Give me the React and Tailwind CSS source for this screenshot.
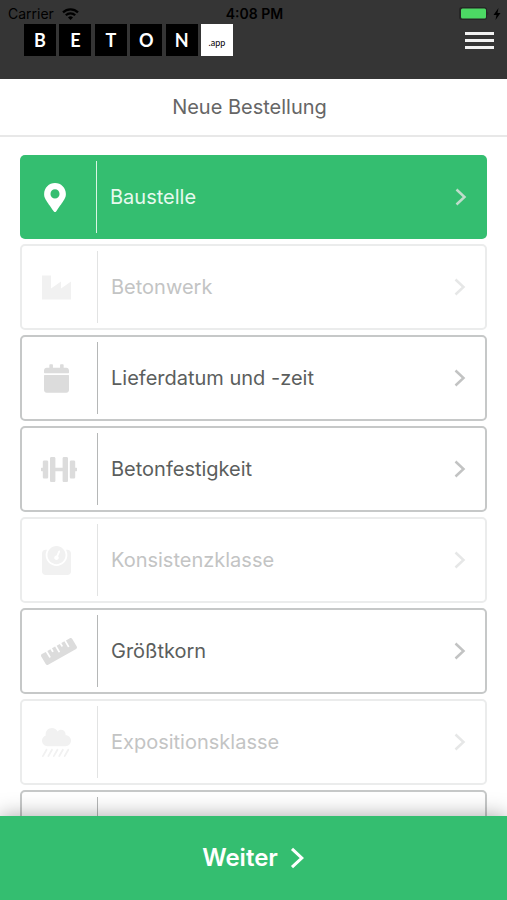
import React from "react";
import {
  FaCalendar,
  FaCloudShowersHeavy,
  FaDumbbell,
  FaMapMarkerAlt,
  FaRuler,
  FaTint,
  FaWeight,
} from "react-icons/fa";

function FactoryIcon({ className }) {
  return (
    <svg viewBox="0 0 29 29" fill="currentColor" className={className}>
      <path d="M0 2.5h9v13l10-7v7l10-7v18H0z" />
    </svg>
  );
}

function Chevron({ className }) {
  return (
    <svg
      viewBox="0 0 12 18"
      fill="none"
      stroke="currentColor"
      strokeWidth="2.5"
      className={className}
    >
      <path d="M1.5 1.5L9.5 9l-8 7.5" />
    </svg>
  );
}

const steps = [
  { label: "Baustelle", Icon: FaMapMarkerAlt, size: "w-[22px]", state: "active" },
  { label: "Betonwerk", Icon: FactoryIcon, size: "w-[29px]", state: "disabled" },
  { label: "Lieferdatum und -zeit", Icon: FaCalendar, size: "w-[25px]", state: "open" },
  { label: "Betonfestigkeit", Icon: FaDumbbell, size: "w-[36px]", state: "open" },
  { label: "Konsistenzklasse", Icon: FaWeight, size: "w-[29px]", state: "disabled" },
  { label: "Größtkorn", Icon: FaRuler, size: "w-[36px]", state: "open" },
  { label: "Expositionsklasse", Icon: FaCloudShowersHeavy, size: "w-[29px]", state: "disabled" },
  { label: "", name: "Weitere Angaben", Icon: FaTint, size: "w-[22px]", state: "open" },
];

const styles = {
  active: {
    row: "h-[84px] px-5 border-0 bg-[#34be70]",
    icon: "text-white",
    line: "bg-[#d9f5e4]",
    text: "text-[#e6f9ee]",
    arrow: "text-[#bfdccb]",
  },
  open: {
    row: "h-[86px] px-[19px] border-2 border-[#c6c8c8] bg-white",
    icon: "text-[#dcdcdc]",
    line: "bg-[#b5b7b7]",
    text: "text-[#5b5e5d]",
    arrow: "text-[#c2c3c3]",
  },
  disabled: {
    row: "h-[86px] px-[19px] border-2 border-[#ebecec] bg-white",
    icon: "text-[#f1f1f1]",
    line: "bg-[#e2e3e3]",
    text: "text-[#c3c4c4]",
    arrow: "text-[#e6e7e7]",
  },
};

function StepRow({ step }) {
  const { label, name, Icon, size, state } = step;
  const s = styles[state];
  return (
    <button
      type="button"
      disabled={state === "disabled"}
      aria-label={name}
      className={`flex w-full shrink-0 items-center rounded-[5px] text-left ${s.row}`}
    >
      <span className="block w-[30px] shrink-0">
        <Icon className={`mx-auto h-[29px] ${size} ${s.icon}`} />
      </span>
      <span className={`ml-[26px] h-[72px] w-px shrink-0 ${s.line}`} />
      <span className={`ml-[13px] flex-1 text-xl ${s.text}`}>{label}</span>
      <Chevron className={`h-[18px] w-3 shrink-0 ${s.arrow}`} />
    </button>
  );
}

function StatusBar() {
  return (
    <div className="grid h-6 grid-cols-3 items-center pt-1 pr-1.5 pl-2 text-sm leading-5 text-black">
      <div className="flex items-center gap-2">
        <span>Carrier</span>
        <svg viewBox="0 0 17 12" fill="none" stroke="currentColor" strokeWidth="2.2" className="h-3 w-[17px]">
          <path d="M1 4.4a10.6 10.6 0 0 1 15 0M3.800 7.300a6.600 6.600 0 0 1 9.400 0" />
          <path d="M8.5 12L6 9.400a3.600 3.600 0 0 1 5 0z" fill="currentColor" stroke="none" />
        </svg>
      </div>
      <span className="text-center font-semibold">4:08 PM</span>
      <div className="flex items-center justify-end gap-1">
        <svg viewBox="0 0 30 14" className="h-3.5 w-[30px]">
          <rect x="0" y="0" width="28" height="13" rx="3" fill="#262626" />
          <rect x="2" y="1.5" width="25" height="10" rx="1.5" fill="#4cd964" />
          <path d="M28.5 4.5c1 .5 1 3.5 0 4z" fill="#222" />
        </svg>
        <svg viewBox="0 0 8 12" fill="currentColor" className="h-3 w-2">
          <path d="M5.5 0L.5 7h3l-1 5 5-7h-3z" />
        </svg>
      </div>
    </div>
  );
}

function Logo() {
  return (
    <a
      href="#"
      aria-label="BETON.app"
      className="flex w-[209px] justify-between font-['Lato',sans-serif] text-lg font-bold text-white"
    >
      {["B", "E", "T", "O", "N"].map((letter) => (
        <span key={letter} className="flex size-8 items-center justify-center bg-black">
          {letter}
        </span>
      ))}
      <span className="flex size-8 items-center justify-center bg-white pt-1.5 text-[9px] font-normal text-black">
        .app
      </span>
    </a>
  );
}

export default function App() {
  return (
    <div className="flex h-screen flex-col bg-white font-['Inter','Liberation_Sans',sans-serif]">
      <header className="h-[79px] shrink-0 bg-[#353535]">
        <StatusBar />
        <div className="flex items-center justify-between pr-[13px] pl-6">
          <Logo />
          <button type="button" aria-label="Menü" className="flex w-[29px] flex-col gap-1">
            <span className="h-[3px] w-full bg-[#f2f2f2]" />
            <span className="h-[3px] w-full bg-[#f2f2f2]" />
            <span className="h-[3px] w-full bg-[#f2f2f2]" />
          </button>
        </div>
      </header>

      <h1 className="flex h-[58px] shrink-0 items-center justify-center border-b-2 border-[#e8e8e8] pr-2 text-xl text-[#666]">
        Neue Bestellung
      </h1>

      <main className="flex min-h-0 flex-1 flex-col gap-[5px] overflow-y-auto px-5 pt-[18px] [scrollbar-width:none]">
        {steps.map((step, i) => (
          <StepRow key={i} step={step} />
        ))}
      </main>

      <footer className="relative shrink-0 shadow-[0_0_20px_rgba(0,0,0,0.35)]">
        <button
          type="button"
          className="flex h-[84px] w-full items-center justify-center gap-3 bg-[#34be70] text-2xl font-semibold text-white"
        >
          Weiter
          <Chevron className="h-[22px] w-[15px]" />
        </button>
      </footer>
    </div>
  );
}
